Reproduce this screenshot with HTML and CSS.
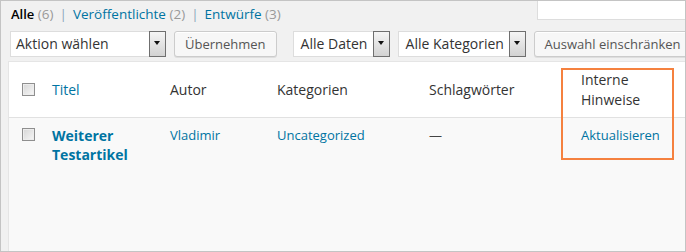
FILE: index.html
```html
<!DOCTYPE html>
<html lang="de">
<head>
<meta charset="utf-8">
<title>Beiträge</title>
<link rel="stylesheet" href="styles.css">
</head>
<body>
<div class="frame">
  <div class="top">
    <ul class="status">
      <li><a class="current">Alle</a> <span class="count">(6)</span></li>
      <li class="sep">|</li>
      <li><a>Veröffentlichte</a> <span class="count">(2)</span></li>
      <li class="sep">|</li>
      <li><a>Entwürfe</a> <span class="count">(3)</span></li>
    </ul>
    <div class="search"></div>
  </div>
  <div class="controls">
    <div class="select sel-action"><span class="sel-text">Aktion wählen</span><span class="arrow"></span></div>
    <button class="btn">Übernehmen</button>
    <div class="select sel-date"><span class="sel-text">Alle Daten</span><span class="arrow"></span></div>
    <div class="select sel-cat"><span class="sel-text">Alle Kategorien</span><span class="arrow"></span></div>
    <button class="btn">Auswahl einschränken</button>
  </div>
  <table class="list">
    <colgroup>
      <col class="c-cb"><col class="c-title"><col class="c-author"><col class="c-cat"><col class="c-tags"><col class="c-notes">
    </colgroup>
    <thead>
      <tr>
        <th class="cb"><span class="check"></span></th>
        <th><a>Titel</a></th>
        <th>Autor</th>
        <th>Kategorien</th>
        <th>Schlagwörter</th>
        <th>Interne Hinweise</th>
      </tr>
    </thead>
    <tbody>
      <tr>
        <td class="cb"><span class="check"></span></td>
        <td class="title"><a>Weiterer Testartikel</a></td>
        <td><a>Vladimir</a></td>
        <td><a>Uncategorized</a></td>
        <td class="dash">—</td>
        <td><a>Aktualisieren</a></td>
      </tr>
    </tbody>
  </table>
  <div class="highlight"></div>
</div>
</body>
</html>
```

FILE: styles.css
```css
* { box-sizing: border-box; }
html, body { margin: 0; padding: 0; }
body {
  font-family: "Open Sans", "Liberation Sans", sans-serif;
  color: #333;
  background: #f1f1f1;
}
.frame {
  position: relative;
  width: 686px;
  height: 252px;
  border: 1px solid #c4c4c4;
  background: #f1f1f1;
  overflow: hidden;
  padding-left: 9px;
}
.top {
  display: flex;
  justify-content: space-between;
  align-items: flex-start;
  height: 26px;
}
.status {
  list-style: none;
  margin: 0;
  padding: 0 0 0 1px;
  display: flex;
  font-size: 13.5px;
  line-height: 26px;
}
.status li { white-space: pre; }
.status a { color: #0074a2; }
.status a.current { color: #000; font-weight: 600; font-size: 13px; }
.status .count { color: #999; font-weight: normal; }
.status .sep { color: #8aa6bb; padding: 0 6px; }
.search {
  width: 168px;
  height: 28px;
  margin-top: -9px;
  margin-right: -20px;
  background: #fff;
  border: 1px solid #ddd;
  flex-shrink: 0;
}
.controls {
  display: flex;
  align-items: center;
  margin-top: 4px;
  height: 26px;
}
.select {
  display: flex;
  flex-shrink: 0;
  height: 26px;
  background: #fff;
  border: 1px solid #ddd;
  font-size: 14px;
  color: #333;
}
.sel-text {
  flex: 1;
  padding-left: 5px;
  line-height: 24px;
  white-space: nowrap;
  overflow: hidden;
}
.arrow {
  position: relative;
  flex-shrink: 0;
  width: 17px;
  height: 26px;
  margin: -1px -1px -1px 0;
  border: 1px solid #6f6f6f;
  background: linear-gradient(#f5f5f5, #d2d2d2);
}
.arrow::after {
  content: "";
  position: absolute;
  left: 4px;
  top: 9px;
  border-left: 3.5px solid transparent;
  border-right: 3.5px solid transparent;
  border-top: 4px solid #111;
}
.sel-action { width: 156px; margin-right: 8px; }
.sel-date { width: 97px; margin-left: 16px; margin-right: 8px; }
.sel-cat { width: 128px; margin-right: 8px; }
.sel-date .sel-text, .sel-cat .sel-text { padding-left: 7px; }
.btn {
  height: 26px;
  padding: 0 10px;
  font-family: inherit;
  font-size: 13px;
  color: #555;
  background: #f7f7f7;
  border: 1px solid #ccc;
  border-radius: 3px;
  box-shadow: inset 0 1px 0 #fff, 0 1px 0 rgba(0,0,0,.08);
  white-space: nowrap;
  flex-shrink: 0;
}
.list {
  margin-top: 4px;
  margin-left: -2px;
  width: 684px;
  table-layout: fixed;
  border-collapse: separate;
  border-spacing: 0;
  border: 1px solid #e5e5e5;
  background: #f9f9f9;
}
.c-cb { width: 33px; }
.c-title { width: 118px; }
.c-author { width: 107px; }
.c-cat { width: 152px; }
.c-tags { width: 152px; }
.c-notes { width: 120px; }
.list a { color: #0074a2; }
.list th {
  background: #fff;
  text-align: left;
  font-weight: normal;
  font-size: 14px;
  line-height: 19.5px;
  color: #333;
  padding: 8px 10px;
  vertical-align: middle;
  border-bottom: 1px solid #e1e1e1;
}
.list td {
  font-size: 13px;
  line-height: 19.5px;
  padding: 8px 10px;
  vertical-align: top;
  height: 140px;
}
.list .cb { padding-left: 13px; padding-right: 0; }
.list td.cb { padding-top: 10px; }
.check {
  display: block;
  width: 13px;
  height: 13px;
  border: 1px solid #8f8f8f;
  background: linear-gradient(135deg, #d6d6d6, #f7f7f7);
  box-shadow: inset 0 0 0 1px #ededed;
}
.list td.title { font-size: 14px; font-weight: 700; line-height: 19px; }
.list td.dash { color: #444; }
.highlight {
  position: absolute;
  left: 560px;
  top: 67px;
  width: 113px;
  height: 92px;
  border: 2px solid #f5813f;
  pointer-events: none;
}
```
